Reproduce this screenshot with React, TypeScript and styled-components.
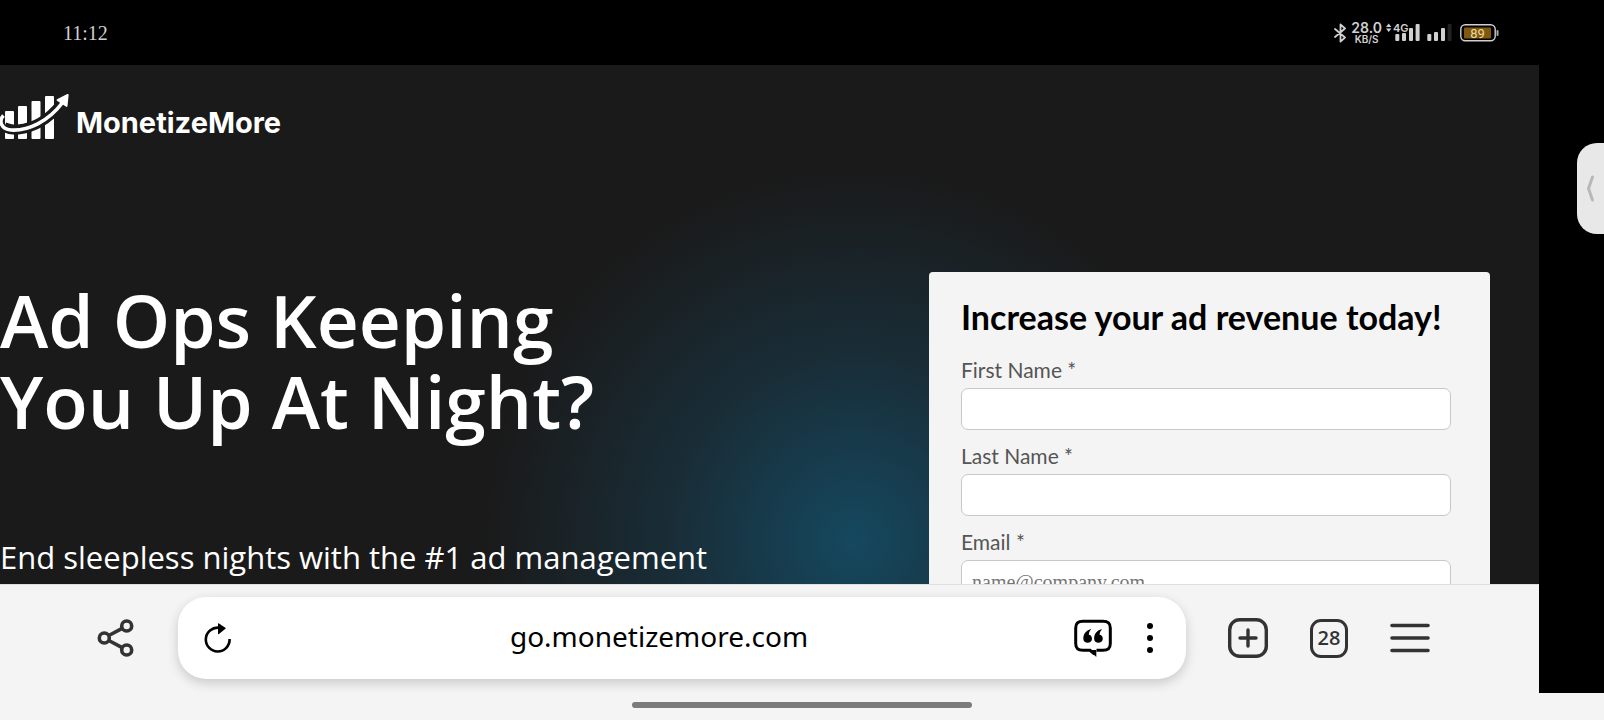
import React from "react";
import styled, { createGlobalStyle } from "styled-components";

const Global = createGlobalStyle`
  * { box-sizing: border-box; }
  body { margin: 0; background: #000; overflow: hidden; }
  h1, h2, p { margin: 0; }
  button { border: 0; padding: 0; background: none; display: block; color: inherit; }
  svg { display: block; }
`;

const Screen = styled.div`
  height: 100vh;
  display: flex;
  flex-direction: column;
`;

const StatusBar = styled.header`
  flex: none;
  height: 65px;
  padding: 0 105px 0 63px;
  display: flex;
  align-items: center;
  justify-content: space-between;
  background: #000;
  color: #d0d0d0;
`;

const Clock = styled.time`
  font: 20px/24px "Liberation Serif", serif;
`;

const StatusIcons = styled.div`
  display: flex;
  align-items: center;
  gap: 4px;
`;

const Speed = styled.div`
  font-family: Inter, sans-serif;
  text-align: center;
  font-weight: 600;
`;

const SpeedLine = styled.div<{ $size: number; $line: number }>`
  font-size: ${(p) => p.$size}px;
  line-height: ${(p) => p.$line}px;
`;

const Body = styled.div`
  flex: 1;
  min-height: 0;
  display: flex;
`;

const Browser = styled.div`
  flex: 1;
  min-width: 0;
  display: flex;
  flex-direction: column;
`;

const SideStrip = styled.aside`
  flex: none;
  width: 65px;
  padding-top: 78px;
  display: flex;
  justify-content: flex-end;
  align-items: flex-start;
  background: #000;
`;

const EdgeHandle = styled.button`
  width: 27px;
  height: 91px;
  border-radius: 20px 0 0 20px;
  background: #e8e8e8;
`;

const Page = styled.main`
  flex: 1;
  min-height: 0;
  overflow: hidden;
  display: flex;
  justify-content: space-between;
  background: #1a1a1a radial-gradient(circle 370px at 855px 475px, #15485f 0%, #192d37 50%, #1a1a1a 100%);
  color: #fff;
`;

const Pitch = styled.section`
  padding-top: 29px;
  font-family: "Open Sans", sans-serif;
`;

const Logo = styled.a`
  display: flex;
  gap: 7px;
  color: #fff;
  text-decoration: none;
`;

const LogoName = styled.span`
  padding-top: 12px;
  font: 700 29px/34px Inter, sans-serif;
`;

const Headline = styled.h1`
  margin-top: 139px;
  font-size: 73px;
  line-height: 81px;
  font-weight: 600;
  white-space: nowrap;
`;

const Lead = styled.p`
  margin-top: 92px;
  font-size: 31px;
  line-height: 48px;
  white-space: nowrap;
`;

const Card = styled.form`
  flex: none;
  width: 561px;
  height: 640px;
  margin: 207px 49px 0 0;
  padding: 23px 39px 0 32px;
  border-radius: 4px;
  background: #f4f4f4;
  font-family: Lato, sans-serif;
`;

const CardTitle = styled.h2`
  margin-bottom: 19px;
  font-size: 34px;
  line-height: 44px;
  font-weight: 700;
  color: #000;
  white-space: nowrap;
`;

const Field = styled.label`
  display: block;
  margin-bottom: 14px;
  font-size: 21px;
  line-height: 24px;
  color: #555;
`;

const TextBox = styled.input`
  display: block;
  width: 100%;
  height: 42px;
  margin-top: 6px;
  padding: 2px 10px 0;
  border: 1px solid #c8c8c8;
  border-radius: 7px;
  background: #fff;
  font: 20px "Liberation Serif", serif;
  &::placeholder { color: #757575; opacity: 1; }
`;

const Toolbar = styled.nav`
  flex: none;
  height: 109px;
  padding: 12px 109px 14px 97px;
  display: flex;
  align-items: center;
  border-top: 1px solid #dedede;
  background: #f4f4f4;
  color: #333;
`;

const AddressBar = styled.div`
  flex: 1;
  height: 82px;
  margin: 0 42px 0 43px;
  padding: 0 28px 0 26px;
  display: flex;
  align-items: center;
  border-radius: 28px;
  background: #fff;
  color: #000;
  box-shadow: 0 4px 12px rgba(0, 0, 0, 0.18);
`;

const Url = styled.input`
  flex: 1;
  min-width: 0;
  border: 0;
  padding: 0 0 4px 12px;
  background: none;
  text-align: center;
  color: #000;
  font: 28px/40px "Noto Sans", sans-serif;
`;

const Tools = styled.div<{ $gap: number }>`
  display: flex;
  align-items: center;
  gap: ${(p) => p.$gap}px;
`;

const TabCount = styled.button`
  width: 38px;
  height: 39px;
  border: 3px solid #333;
  border-radius: 11px;
  font: 600 20px/32px "Open Sans", sans-serif;
  text-align: center;
`;

const GestureBar = styled.footer`
  flex: none;
  height: 27px;
  display: flex;
  justify-content: center;
  align-items: center;
  padding-bottom: 3px;
  background: #f4f4f4;
`;

const GesturePill = styled.div`
  width: 340px;
  height: 6px;
  border-radius: 3px;
  background: #7b7b7b;
`;

const BluetoothIcon = () => (
  <svg width="13" height="20" viewBox="0 0 13 20" fill="none" stroke="currentColor" strokeWidth="1.8" strokeLinejoin="round" strokeLinecap="round">
    <path d="M1 6 L11 14.5 L6.500 18.6 V1.4 L11 5.5 L1 14" />
  </svg>
);

const SignalIcons = () => (
  <svg width="70" height="20" viewBox="0 0 70 20" fill="currentColor">
    <path d="M0 4 L2.7 0.5 L5.4 4 Z M0 5.6 L2.7 9 L5.4 5.6 Z" />
    <text x="7" y="9" fontFamily="Inter, sans-serif" fontSize="11" fontWeight="600">4G</text>
    <rect x="9.3" y="11" width="4" height="7" rx="1" />
    <rect x="16" y="10" width="4" height="8" rx="1" />
    <rect x="23" y="5" width="4" height="13" rx="1" />
    <rect x="29.6" y="1" width="4" height="17" rx="1" />
    <rect x="41.3" y="11" width="4" height="7" rx="1" />
    <rect x="48" y="9" width="4" height="9" rx="1" />
    <rect x="55" y="5" width="4" height="13" rx="1" />
    <rect x="61.6" y="1" width="4" height="17" rx="1" fill="#222" />
  </svg>
);

const BatteryIcon = () => (
  <svg width="39" height="18" viewBox="0 0 39 18">
    <rect x="0.8" y="0.8" width="34.4" height="16" rx="4.5" fill="none" stroke="#d0d0d0" strokeWidth="1.4" />
    <rect x="36.5" y="6" width="2" height="6" rx="1" fill="#aaa" />
    <rect x="4" y="3.5" width="27" height="11" rx="1" fill="#80590c" />
    <text x="17.5" y="13.500" textAnchor="middle" fontFamily="Roboto, sans-serif" fontSize="13" fill="#ecd9a8">89</text>
  </svg>
);

const LogoMark = () => (
  <svg width="69" height="46" viewBox="0 0 69 46">
    <g fill="#fff">
      <rect x="5" y="17" width="9" height="28" rx="1" />
      <rect x="18" y="12" width="9" height="33" rx="1" />
      <rect x="31.500" y="7" width="9" height="38" rx="1" />
      <rect x="45" y="2" width="9" height="43" rx="1" />
    </g>
    <path d="M4 33 C10 36 14 36 18 35.500 C34 34 49 25 61 10" fill="none" stroke="#1a1a1a" strokeWidth="10" />
    <path d="M3.500 21.500 C-1 26 0 35 11 36 C28 37 48 28 63 8" fill="none" stroke="#fff" strokeWidth="3.6" />
    <path d="M67.300 0 Q68.800 -0.300 68.600 1.500 L67.500 12 Q67 13.500 65.800 12.500 L57 6.800 Q56 5.800 57.500 5 Z" fill="#fff" />
  </svg>
);

const ShareIcon = () => (
  <svg width="38" height="38" viewBox="0 0 38 38" fill="none" stroke="currentColor" strokeWidth="3.6">
    <circle cx="7.300" cy="19" r="5" />
    <circle cx="29.700" cy="7" r="5" />
    <circle cx="29.700" cy="31" r="5" />
    <path d="M11.800 16.500 L25.200 9.300 M11.800 21.500 L25.200 28.700" />
  </svg>
);

const ReloadIcon = () => (
  <svg width="28" height="30" viewBox="0 0 28 30">
    <path d="M15 4.700 A11.900 11.900 0 1 0 25.600 16" fill="none" stroke="#000" strokeWidth="2.6" />
    <path d="M14 0.500 Q14 0 15 0.600 L22 5.300 L15 11 Q14 11.500 14 10.500 Z" fill="#000" />
  </svg>
);

const QuoteIcon = () => (
  <svg width="38" height="38" viewBox="0 0 38 38">
    <path d="M22.500 31.300 H29 C34.500 31.300 36.300 29 36.300 24.500 V9 C36.300 4 34 2.300 29 2.300 H9 C4 2.300 1.700 4 1.700 9 V24.500 C1.700 29 3.500 31.300 9 31.300 H16 L20.500 35" fill="none" stroke="#000" strokeWidth="3" />
    <path d="M15 31 H22.300 V38 Z" fill="#000" />
    <path d="M17.200 10.300 C15.500 10.300 9.300 12.500 9.300 19.500 C9.300 25.500 18 25 18 19.800 C18 17 16.300 16 14.800 15.700 C15 13 16.200 11.300 17.200 10.300 Z M28 10.300 C26.300 10.300 20.100 12.500 20.100 19.500 C20.100 25.500 28.800 25 28.800 19.800 C28.800 17 27.100 16 25.600 15.700 C25.800 13 27 11.300 28 10.300 Z" fill="#000" />
  </svg>
);

const DotsIcon = () => (
  <svg width="16" height="32" viewBox="0 0 16 32" fill="#000">
    <circle cx="8" cy="4" r="3" />
    <circle cx="8" cy="16" r="3" />
    <circle cx="8" cy="28" r="3" />
  </svg>
);

const NewTabIcon = () => (
  <svg width="40" height="40" viewBox="0 0 40 40" fill="none" stroke="currentColor" strokeWidth="3.4" strokeLinecap="round">
    <rect x="1.700" y="1.700" width="36.600" height="36.600" rx="10" />
    <path d="M20 12 V28 M12 20 H28" />
  </svg>
);

const MenuIcon = () => (
  <svg width="40" height="32" viewBox="0 0 40 32" stroke="currentColor" strokeWidth="3.6" strokeLinecap="round">
    <path d="M2 3.500 H38 M2 16 H38 M2 28.500 H38" />
  </svg>
);

const fields = [
  { id: "first", label: "First Name *", type: "text", placeholder: "" },
  { id: "last", label: "Last Name *", type: "text", placeholder: "" },
  { id: "email", label: "Email *", type: "email", placeholder: "name@company.com" },
];

export default function App() {
  return (
    <Screen>
      <Global />
      <StatusBar>
        <Clock>11:12</Clock>
        <StatusIcons>
          <BluetoothIcon />
          <Speed>
            <SpeedLine $size={14} $line={13}>28.0</SpeedLine>
            <SpeedLine $size={10} $line={10}>KB/S</SpeedLine>
          </Speed>
          <SignalIcons />
          <BatteryIcon />
        </StatusIcons>
      </StatusBar>
      <Body>
        <Browser>
          <Page>
            <Pitch>
              <Logo href="#" aria-label="MonetizeMore">
                <LogoMark />
                <LogoName>MonetizeMore</LogoName>
              </Logo>
              <Headline>
                Ad Ops Keeping
                <br />
                You Up At Night?
              </Headline>
              <Lead>End sleepless nights with the #1 ad management</Lead>
            </Pitch>
            <Card>
              <CardTitle>Increase your ad revenue today!</CardTitle>
              {fields.map((f) => (
                <Field key={f.id} htmlFor={f.id}>
                  {f.label}
                  <TextBox id={f.id} type={f.type} placeholder={f.placeholder} />
                </Field>
              ))}
            </Card>
          </Page>
          <Toolbar>
            <button aria-label="Share"><ShareIcon /></button>
            <AddressBar>
              <button aria-label="Reload"><ReloadIcon /></button>
              <Url aria-label="Address" defaultValue="go.monetizemore.com" />
              <Tools $gap={30}>
                <button aria-label="Reader"><QuoteIcon /></button>
                <button aria-label="More"><DotsIcon /></button>
              </Tools>
            </AddressBar>
            <Tools $gap={42}>
              <button aria-label="New tab"><NewTabIcon /></button>
              <TabCount aria-label="Tabs">28</TabCount>
              <button aria-label="Menu"><MenuIcon /></button>
            </Tools>
          </Toolbar>
        </Browser>
        <SideStrip>
          <EdgeHandle aria-label="Open side panel">
            <svg width="27" height="30" viewBox="0 0 27 30" fill="none" stroke="#b8b8b8" strokeWidth="3" strokeLinecap="round" strokeLinejoin="round">
              <path d="M15.500 3 L11.500 14.500 L15.500 26" />
            </svg>
          </EdgeHandle>
        </SideStrip>
      </Body>
      <GestureBar>
        <GesturePill />
      </GestureBar>
    </Screen>
  );
}
